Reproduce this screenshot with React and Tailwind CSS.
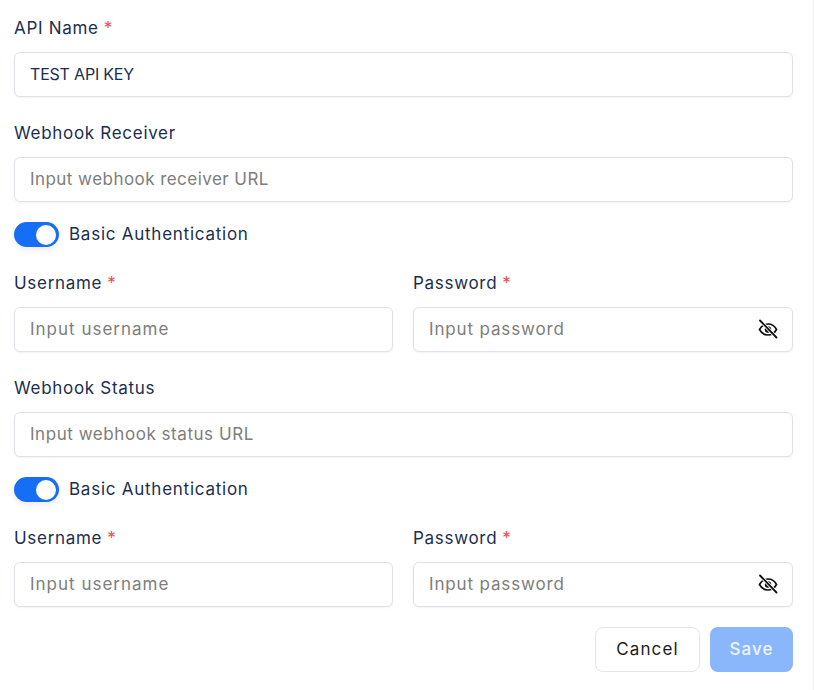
import React, { useState } from 'react';

const font = "font-['Inter','Noto_Sans',sans-serif]";

const EyeSlash = () => (
  <svg viewBox="0 0 20 20" fill="none" className="absolute right-[15px] top-[12px] h-[20px] w-[20px] text-[#111]">
    <path d="M1.5 10.5C3.5 6.8 6.5 5 10 5s6.5 1.8 8.5 5.5C16.5 14.2 13.5 16 10 16s-6.5-1.8-8.5-5.5Z" stroke="currentColor" strokeWidth="1.7" />
    <circle cx="10" cy="10.5" r="3.2" fill="currentColor" />
    <path d="M2 1.5 18.5 18.5" stroke="white" strokeWidth="3.4" />
    <path d="M2 1.5 18.5 18.5" stroke="currentColor" strokeWidth="1.8" strokeLinecap="round" />
  </svg>
);

const Label = ({ text, required }) => (
  <label className="block h-[24px] text-[17px] leading-[24px] tracking-[0.7px] text-[#1b2e4f]">
    {text}
    {required && <span className="ml-[5px] text-[#f04a4a]">*</span>}
  </label>
);

const Input = ({ placeholder, defaultValue, icon, track = 'placeholder:tracking-[0.45px]' }) => (
  <div className="relative mt-[12px]">
    <input
      defaultValue={defaultValue}
      placeholder={placeholder}
      className={`block h-[45px] w-full rounded-md border border-[#dfe1e8] bg-white px-[15px] pb-[1px] text-[16px] tracking-[-0.2px] text-[#1b2e4f] shadow-[0_1px_2px_rgba(0,0,0,0.05)] outline-none placeholder:text-[17px] placeholder:text-[#7d7d7d] ${track}`}
    />
    {icon && <EyeSlash />}
  </div>
);

const Toggle = () => {
  const [on, setOn] = useState(true);
  return (
    <div className="mt-[20px] flex h-[25px] items-center gap-[10px]">
      <button
        onClick={() => setOn(!on)}
        className={`flex h-[25px] w-[45px] items-center rounded-full px-[3px] shadow-[0_3px_6px_rgba(0,0,0,0.08)] ${on ? 'justify-end bg-[#156ef5]' : 'justify-start bg-gray-300'}`}
      >
        <span className="h-[20px] w-[20px] rounded-full bg-white" />
      </button>
      <span className="text-[17px] tracking-[0.75px] text-[#1b2e4f]">Basic Authentication</span>
    </div>
  );
};

const AuthFields = () => (
  <div className="mt-[24px] grid grid-cols-[379px_1fr] gap-x-[20px]">
    <div>
      <Label text="Username" required />
      <Input placeholder="Input username" track="placeholder:tracking-[1px]" />
    </div>
    <div>
      <Label text="Password" required />
      <Input placeholder="Input password" track="placeholder:tracking-[0.85px]" icon />
    </div>
  </div>
);

const App = () => (
  <div className={`h-[690px] w-[814px] overflow-hidden border-r border-[#eeeeee] bg-white pl-[14px] pr-[20px] pt-[16px] ${font}`}>
    <Label text="API Name" required />
    <Input defaultValue="TEST API KEY" />
    <div className="mt-[24px]">
      <Label text="Webhook Receiver" />
      <Input placeholder="Input webhook receiver URL" />
    </div>
    <Toggle />
    <AuthFields />
    <div className="mt-[24px]">
      <Label text="Webhook Status" />
      <Input placeholder="Input webhook status URL" track="placeholder:tracking-[0.55px]" />
    </div>
    <Toggle />
    <AuthFields />
    <div className="mt-[20px] flex justify-end gap-[10px]">
      <button className="h-[45px] w-[105px] rounded-lg border border-[#e4e4e4] bg-white text-[17px] tracking-[1.1px] text-[#1c1c1c]">Cancel</button>
      <button className="h-[45px] w-[83px] rounded-lg bg-[#8ab6fb] text-[17px] font-medium tracking-[1px] text-[#eef4ff]">Save</button>
    </div>
  </div>
);

export default App;
